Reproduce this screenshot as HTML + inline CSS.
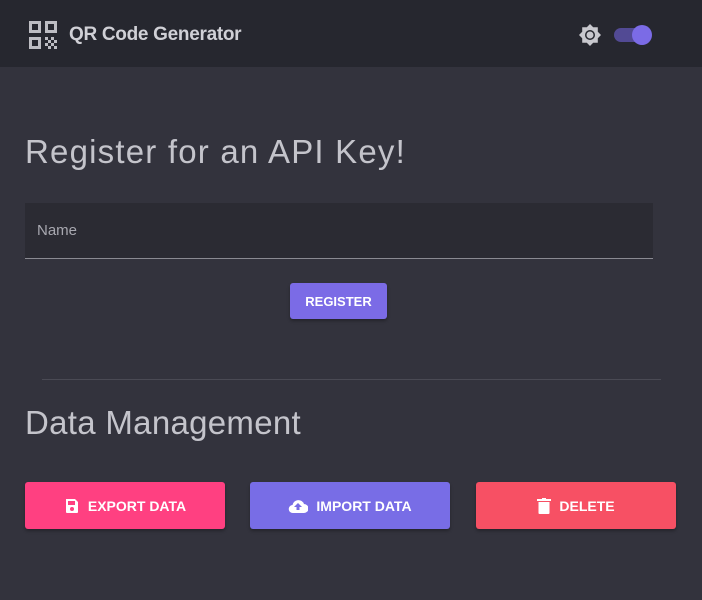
<!DOCTYPE html>
<html><head><style>
body{margin:0;width:702px;height:600px;background:#33333d;font-family:"Liberation Sans",sans-serif;overflow:hidden;position:relative}
.hdr{position:absolute;left:0;top:0;width:702px;height:67px;background:#26272f}
.t{position:absolute;left:69px;top:24px;color:#d0d0d6;font-size:19px;font-weight:bold;letter-spacing:-0.3px}
h1{position:absolute;margin:0;font-weight:normal;color:#c4c4cb;font-size:33px;left:25px;letter-spacing:0.3px}
.in{position:absolute;left:25px;top:203px;width:628px;height:56px;background:#2b2b33;border-bottom:1px solid #8a8a92;box-sizing:border-box}
.in span{position:absolute;left:12px;top:19px;color:#a8a8b0;font-size:15px}
.btn{position:absolute;color:#fff;font-weight:bold;font-size:14px;border-radius:3px;display:flex;align-items:center;justify-content:center;gap:8px;box-shadow:0 2px 3px rgba(0,0,0,.3)}
</style></head><body>
<div class="hdr">
<svg style="position:absolute;left:29px;top:21px" width="28" height="28" viewBox="0 0 28 28" fill="#bdbdc3"><path d="M0 0h12v12H0zM3 3v6h6V3zM16 0h12v12H16zM19 3v6h6V3zM0 16h12v12H0zM3 19v6h6v-6z" fill-rule="evenodd"/><path d="M16 16h3v3h-3zM22 16h3v3h-3zM19 19h3v3h-3zM25 19h3v3h-3zM16 22h3v3h-3zM22 22h3v3h-3zM19 25h3v3h-3zM25 25h3v3h-3z"/></svg>
<div class="t">QR Code Generator</div>
<svg style="position:absolute;left:578px;top:23px" width="24" height="24" viewBox="0 0 24 24" fill="#c8c8ce"><path d="M12 1l3.2 3.2H19.8v4.6L23 12l-3.2 3.2v4.6h-4.6L12 23l-3.2-3.2H4.2v-4.6L1 12l3.2-3.2V4.2h4.6z"/><circle cx="12" cy="12" r="5" fill="#26272f"/><circle cx="12" cy="12" r="3.5" fill="#c8c8ce"/></svg>
<div style="position:absolute;left:614px;top:28px;width:36px;height:14px;border-radius:7px;background:#524a94"></div>
<div style="position:absolute;left:632px;top:25px;width:20px;height:20px;border-radius:50%;background:#7b6be6"></div>
</div>
<h1 style="top:133px;letter-spacing:1.2px">Register for an API Key!</h1>
<div class="in"><span>Name</span></div>
<div class="btn" style="left:290px;top:283px;width:97px;height:36px;background:#7b6be6;font-size:13px">REGISTER</div>
<div style="position:absolute;left:42px;top:379px;width:619px;height:1px;background:#4a4a54"></div>
<h1 style="top:404px">Data Management</h1>
<div class="btn" style="left:25px;top:482px;width:200px;height:47px;background:#ff4081"><svg width="16" height="16" viewBox="0 0 16 16"><path d="M2 1h9l3 3v10a1 1 0 01-1 1H3a1 1 0 01-1-1z" fill="#fff"/><rect x="4" y="3" width="7" height="4" fill="#ff4081"/><circle cx="8" cy="11" r="2" fill="#ff4081"/></svg>EXPORT DATA</div>
<div class="btn" style="left:250px;top:482px;width:200px;height:47px;background:#786de6"><svg width="20" height="16" viewBox="0 0 20 16"><path d="M5 15a4 4 0 01-.5-8A6 6 0 0116 6a4.5 4.5 0 010 9z" fill="#fff"/><path d="M10 5l-4 4h2.5v3h3V9H14z" fill="#786de6"/></svg>IMPORT DATA</div>
<div class="btn" style="left:476px;top:482px;width:200px;height:47px;background:#f75064"><svg width="14" height="16" viewBox="0 0 14 16" fill="#fff"><rect x="0" y="1" width="14" height="2"/><rect x="5" y="0" width="4" height="2"/><path d="M1.5 4h11v11a1 1 0 01-1 1h-9a1 1 0 01-1-1z"/></svg>DELETE</div>
</body></html>
